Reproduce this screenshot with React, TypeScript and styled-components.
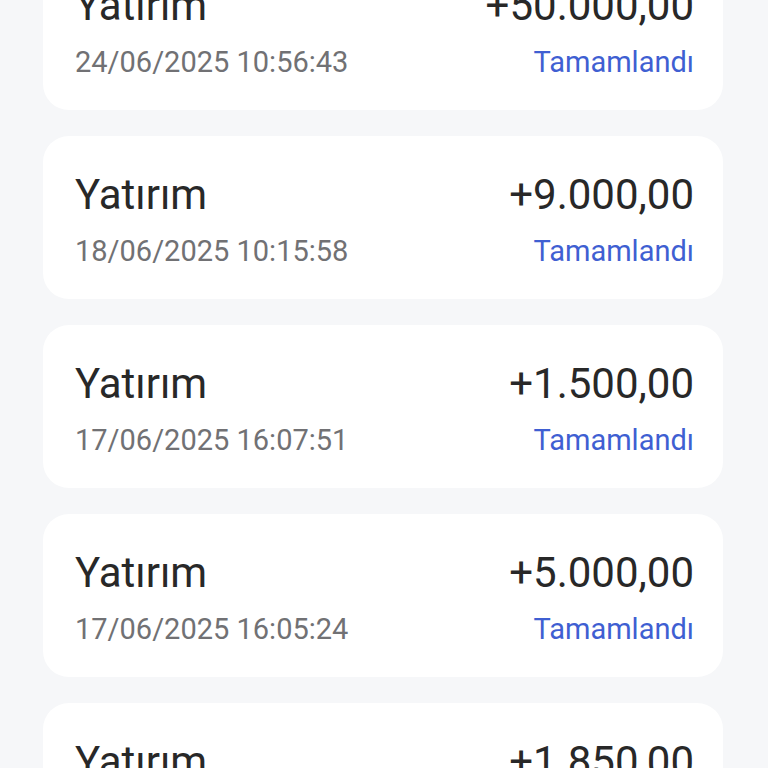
import styled, { createGlobalStyle } from "styled-components";

const GlobalStyle = createGlobalStyle`
  html, body {
    margin: 0;
    padding: 0;
    background: #f6f7f9;
    font-family: Roboto, "Noto Sans", "Liberation Sans", sans-serif;
  }
`;

const Page = styled.div`
  height: 768px;
  overflow: hidden;
  background: #f6f7f9;
`;

// the list is scrolled a little, so the first card is cut off at the top
const List = styled.div`
  display: flex;
  flex-direction: column;
  gap: 26px;
  margin-top: -53px;
  padding: 0 45px 0 43px;
`;

const Card = styled.div`
  background: #ffffff;
  border-radius: 26px;
  height: 163px;
  box-sizing: border-box;
  padding: 34px 29px 0 32px;
  display: grid;
  grid-template-columns: 1fr auto;
  grid-template-rows: 50px 34px;
  row-gap: 14px;
`;

const Title = styled.div`
  font-size: 42px;
  line-height: 50px;
  color: #282828;
  white-space: nowrap;
`;

const Amount = styled(Title)`
  text-align: right;
`;

const Meta = styled.div<{ $accent?: boolean }>`
  font-size: 29px;
  line-height: 34px;
  white-space: nowrap;
  color: ${(p) => (p.$accent ? "#3f5fd2" : "#717174")};
  text-align: ${(p) => (p.$accent ? "right" : "left")};
`;

interface Tx {
  amount: string;
  date: string;
}

const items: Tx[] = [
  { amount: "+50.000,00", date: "24/06/2025 10:56:43" },
  { amount: "+9.000,00", date: "18/06/2025 10:15:58" },
  { amount: "+1.500,00", date: "17/06/2025 16:07:51" },
  { amount: "+5.000,00", date: "17/06/2025 16:05:24" },
  { amount: "+1.850,00", date: "16/06/2025 12:40:10" },
];

const App = () => {
  return (
    <>
      <GlobalStyle />
      <Page>
        <List>
          {items.map((tx, i) => (
            <Card key={i}>
              <Title>Yatırım</Title>
              <Amount>{tx.amount}</Amount>
              <Meta>{tx.date}</Meta>
              <Meta $accent>Tamamlandı</Meta>
            </Card>
          ))}
        </List>
      </Page>
    </>
  );
};

export default App;
